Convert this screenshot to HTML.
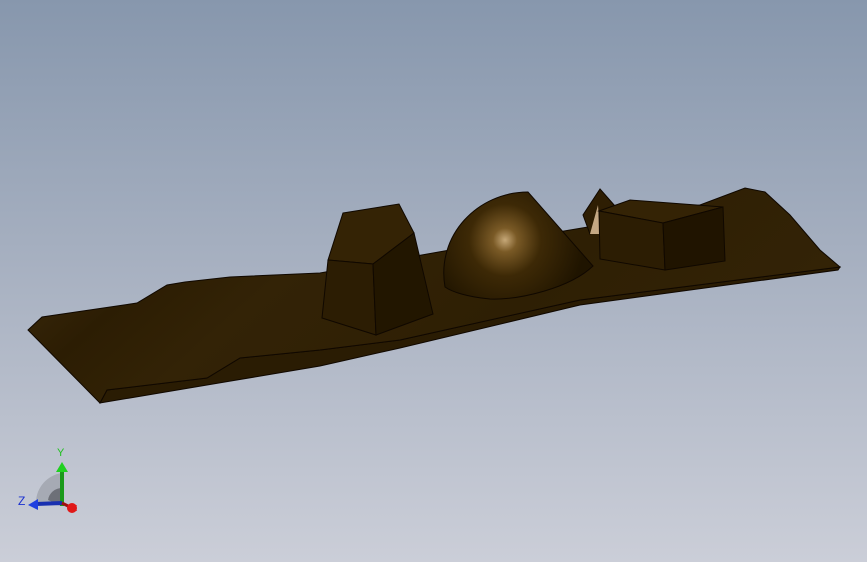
<!DOCTYPE html>
<html><head><style>
html,body{margin:0;padding:0}
body{width:867px;height:562px;overflow:hidden;background:linear-gradient(#8797ad 0%,#a9b2c2 50%,#cbced8 100%);font-family:"Liberation Sans",sans-serif}
svg{position:absolute;left:0;top:0}
</style></head><body>
<svg width="867" height="562" viewBox="0 0 867 562">
<defs>
<linearGradient id="slab" x1="0" y1="0" x2="1" y2="0.3">
<stop offset="0" stop-color="#2e1f04"/><stop offset="0.12" stop-color="#38270a"/><stop offset="0.25" stop-color="#2c1d03"/><stop offset="0.4" stop-color="#332306"/><stop offset="0.7" stop-color="#2e1f04"/><stop offset="1" stop-color="#332306"/>
</linearGradient>
<radialGradient id="dome" cx="505" cy="240" r="80" gradientUnits="userSpaceOnUse">
<stop offset="0" stop-color="#c6a878"/><stop offset="0.15" stop-color="#7a5a26"/><stop offset="0.45" stop-color="#3d2906"/><stop offset="1" stop-color="#1f1400"/>
</radialGradient>
</defs>
<!-- slab side (behind) -->
<path d="M100,403 L107,390 L207,378 L240,358 L320,350 L400,340 L580,300 L840,267 L838,270 L580,305 L400,348 L320,366 Z" fill="#2a1c03" stroke="#100800" stroke-width="1"/>
<!-- slab top -->
<path d="M28,330 L42,317 L137,303 L167,285 L185,282 L230,277 L320,273 L450,250 L600,225 L700,205 L745,188 L765,192 L790,215 L820,250 L840,267 L580,300 L400,340 L320,350 L240,358 L207,378 L107,390 L100,403 Z" fill="url(#slab)" stroke="#100800" stroke-width="1"/>
<!-- block 1 -->
<path d="M343,213 L399,204 L414,233 L373,264 L328,260 Z" fill="#342305" stroke="#100800"/>
<path d="M328,260 L373,264 L376,335 L322,318 Z" fill="#2c1d03" stroke="#100800"/>
<path d="M373,264 L414,233 L433,314 L376,335 Z" fill="#221600" stroke="#100800"/>
<!-- dome -->
<path d="M445,287 C436,235 478,192 528,192 L593,266 C570,288 520,300 490,299 C468,297 452,292 445,287 Z" fill="url(#dome)" stroke="#100800"/>
<!-- pyramid -->
<path d="M600,189 L583,215 L590,234 L615,206 Z" fill="#2e1e03" stroke="#100800"/>
<path d="M590,234 L598,205 L600,234 Z" fill="#c4a884"/>
<!-- box -->
<path d="M599,211 L630,200 L723,207 L663,223 Z" fill="#342305" stroke="#100800"/>
<path d="M599,211 L663,223 L665,270 L600,259 Z" fill="#2c1d03" stroke="#100800"/>
<path d="M663,223 L723,207 L725,261 L665,270 Z" fill="#201400" stroke="#100800"/>
<!-- triad -->
<path d="M62,506 L36,502 A30,30 0 0 1 62,473 Z" fill="#9a9ea6" opacity="0.7"/>
<path d="M62,506 L48,500 A14,14 0 0 1 62,488 Z" fill="#6d7078"/>
<line x1="62" y1="506" x2="62" y2="472" stroke="#1a9a1a" stroke-width="4"/>
<polygon points="56,472 68,472 62,462" fill="#20d020"/>
<line x1="62" y1="503" x2="36" y2="504" stroke="#1830b0" stroke-width="4"/>
<polygon points="38,499 38,510 28,505" fill="#2040e0"/>
<line x1="62" y1="503" x2="70" y2="507" stroke="#a01010" stroke-width="3"/>
<circle cx="72" cy="508" r="5" fill="#e01818"/>
<text x="57" y="456" font-size="11" fill="#20c020">Y</text>
<text x="18" y="505" font-size="12" fill="#1a30d0">Z</text>
<text x="72" y="511" font-size="8" fill="#e01818">X</text>
</svg>
</body></html>
